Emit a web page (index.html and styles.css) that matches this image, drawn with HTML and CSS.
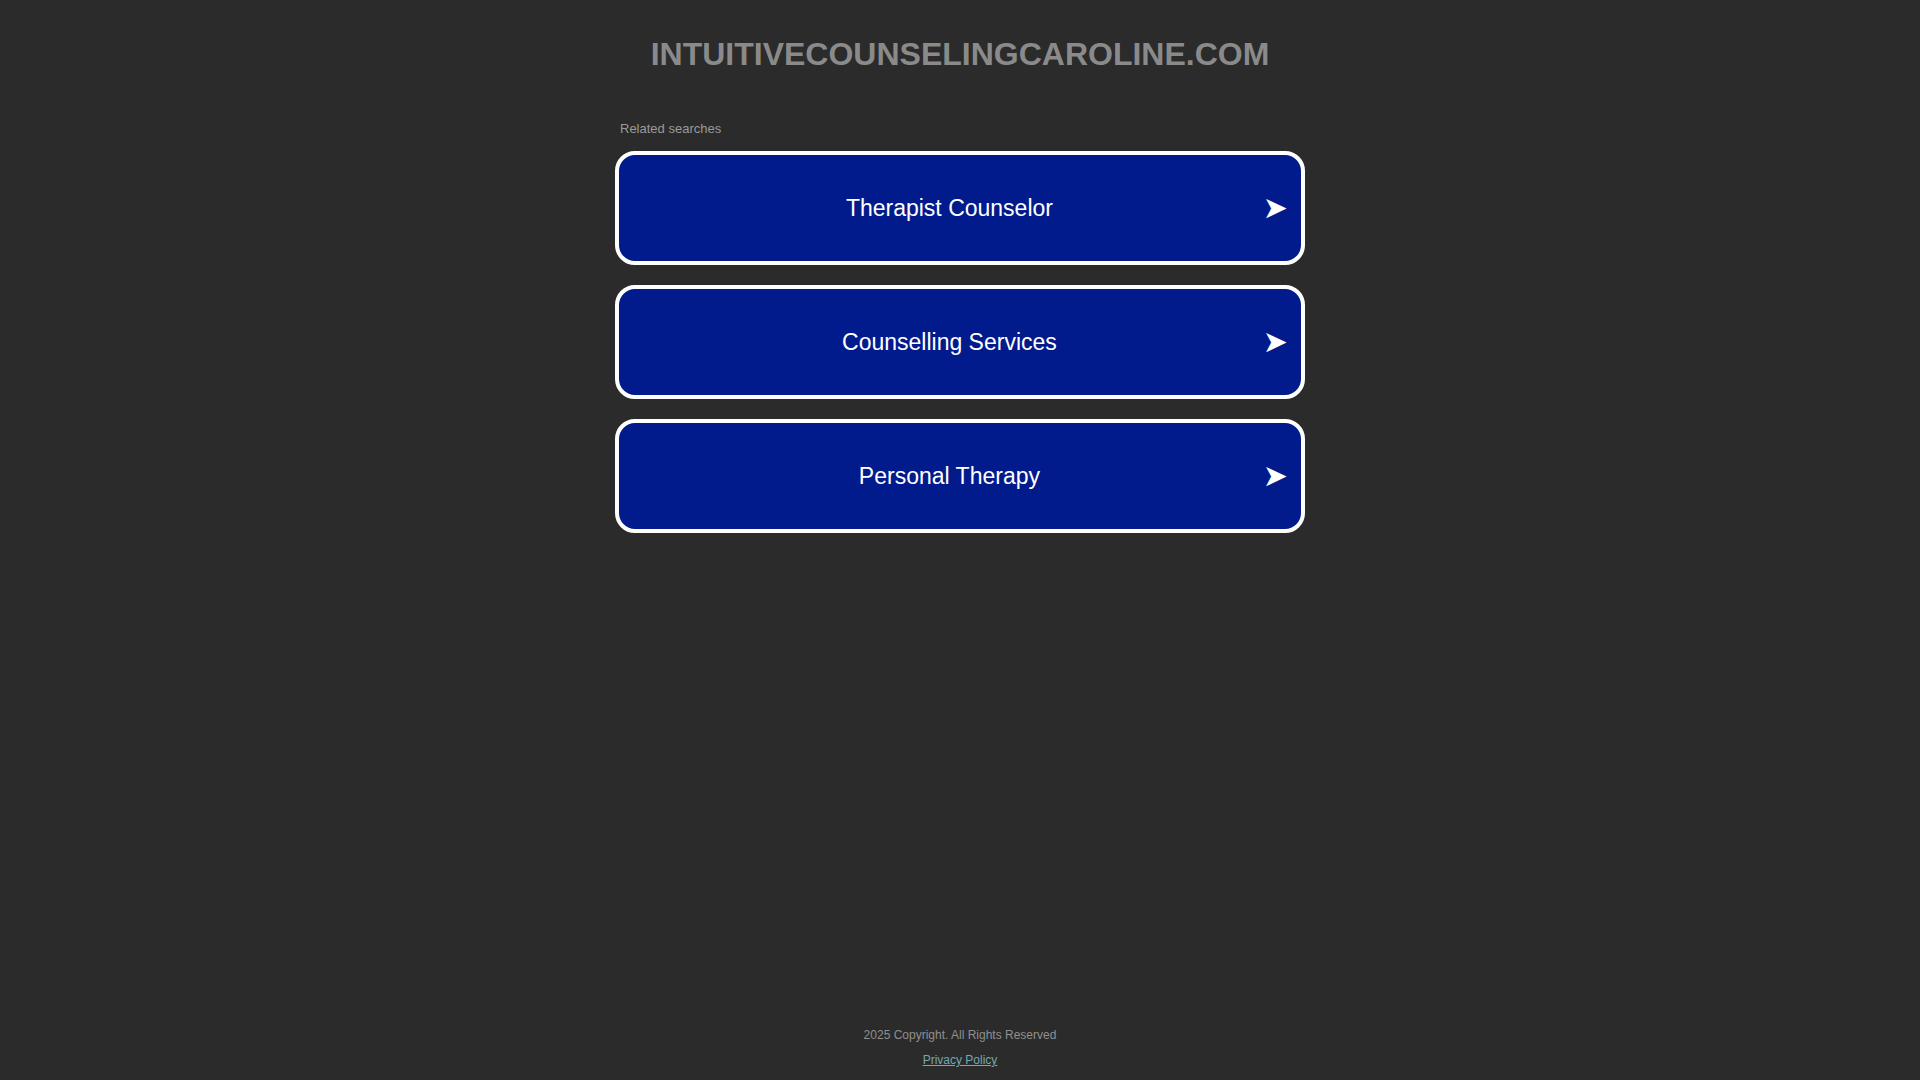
FILE: index.html
```html
<!DOCTYPE html>
<html lang="en">
<head>
<meta charset="utf-8">
<title>intuitivecounselingcaroline.com</title>
<link rel="stylesheet" href="styles.css">
</head>
<body>
<div class="page">
  <header class="header">
    <h1 class="domain">INTUITIVECOUNSELINGCAROLINE.COM</h1>
  </header>
  <main class="main">
    <div class="related">
      <p class="related-title">Related searches</p>
      <ul class="ads">
        <li class="ad"><a class="ad-link" href="#"><span class="ad-text">Therapist Counselor</span><span class="ad-arrow">➤</span></a></li>
        <li class="ad"><a class="ad-link" href="#"><span class="ad-text">Counselling Services</span><span class="ad-arrow">➤</span></a></li>
        <li class="ad"><a class="ad-link" href="#"><span class="ad-text">Personal Therapy</span><span class="ad-arrow">➤</span></a></li>
      </ul>
    </div>
  </main>
  <footer class="footer">
    <p class="copyright">2025 Copyright. All Rights Reserved</p>
    <a class="privacy" href="#">Privacy Policy</a>
  </footer>
</div>
</body>
</html>
```

FILE: styles.css
```css
html, body {
  margin: 0;
  padding: 0;
  height: 100%;
}
body {
  background: #2b2b2b;
  font-family: "Liberation Sans", Arial, sans-serif;
  color: #ffffff;
}
.page {
  min-height: 100vh;
  display: flex;
  flex-direction: column;
  align-items: center;
}
.header {
  padding-top: 36px;
  text-align: center;
}
.domain {
  margin: 0;
  font-size: 32px;
  font-weight: bold;
  line-height: 37px;
  color: #8a8a8a;
}
.main {
  width: 690px;
  margin-top: 48px;
}
.related-title {
  margin: 0 0 0 5px;
  font-size: 13px;
  line-height: 15px;
  color: #9a9a9a;
}
.ads {
  list-style: none;
  margin: 15px 0 0 0;
  padding: 0;
  display: flex;
  flex-direction: column;
  gap: 20px;
}
.ad-link {
  box-sizing: border-box;
  height: 114px;
  display: flex;
  align-items: center;
  padding: 0 13px 0 17px;
  background: #011b8c;
  border: 4px solid #ffffff;
  border-radius: 20px;
  color: #ffffff;
  text-decoration: none;
}
.ad-text {
  flex: 1;
  text-align: center;
  font-size: 23px;
}
.ad-arrow {
  font-family: "DejaVu Sans", sans-serif;
  font-size: 30px;
  line-height: 1;
}
.footer {
  margin-top: auto;
  padding-bottom: 12px;
  text-align: center;
}
.copyright {
  margin: 0 0 8px 0;
  font-size: 12px;
  line-height: 14px;
  color: #8f8f8f;
}
.privacy {
  font-size: 12px;
  line-height: 14px;
  color: #74a9ae;
}
```
